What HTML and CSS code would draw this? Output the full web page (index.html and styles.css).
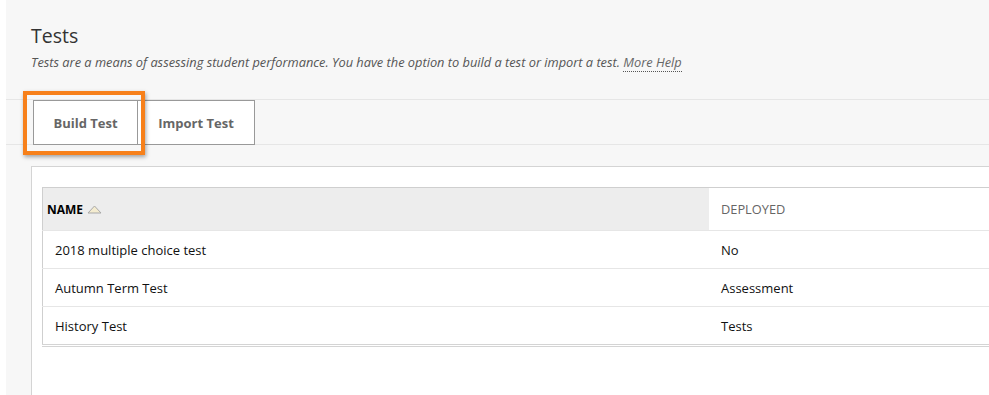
FILE: index.html
```html
<!DOCTYPE html>
<html lang="en">
<head>
  <meta charset="UTF-8" />
  <title>Tests</title>
  <link rel="stylesheet" href="styles.css">
</head>
<body>
  <div class="page">
    <div class="page-header">
      <h1>Tests</h1>
      <p class="intro">Tests are a means of assessing student performance. You have the option to build a test or import a test. <a href="#" class="help">More Help</a></p>
    </div>

    <div class="toolbar">
      <button class="tool-btn highlighted">Build Test</button>
      <button class="tool-btn">Import Test</button>
    </div>

    <div class="panel">
      <table class="list">
        <thead>
          <tr>
            <th class="col-name">NAME <span class="sort-icon"><svg width="15" height="9" viewBox="0 0 15 9"><path d="M7.5 1 L14 8 L1 8 Z" fill="#f4ecd0" stroke="#a9a9a9" stroke-width="1"/></svg></span></th>
            <th class="col-deployed">DEPLOYED</th>
          </tr>
        </thead>
        <tbody>
          <tr><td class="cell-name">2018 multiple choice test</td><td>No</td></tr>
          <tr><td class="cell-name">Autumn Term Test</td><td>Assessment</td></tr>
          <tr><td class="cell-name">History Test</td><td>Tests</td></tr>
        </tbody>
      </table>
    </div>
  </div>
</body>
</html>
```

FILE: styles.css
```css
html, body {
  margin: 0;
  height: 100%;
  overflow: hidden;
  background: #fff;
}

body {
  font-family: 'Open Sans', 'Liberation Sans', sans-serif;
  color: #222;
}

.page {
  margin-left: 6px;
  width: 1100px;
  height: 100%;
  background: #f7f7f7;
}

.page-header {
  padding: 22px 0 0 25px;
  height: 99px;
  box-sizing: border-box;
}

h1 {
  margin: 0;
  font-size: 19.5px;
  font-weight: 400;
  line-height: 28px;
  color: #333;
}

.intro {
  margin: 3px 0 0;
  font-size: 12.8px;
  font-style: italic;
  color: #555;
}

.help {
  color: #666;
  text-decoration: none;
  border-bottom: 1px dotted #555;
}

.toolbar {
  display: flex;
  border-top: 1px solid #e6e6e6;
  border-bottom: 1px solid #e6e6e6;
  padding: 0 0 0 27px;
  height: 46px;
  box-sizing: border-box;
  align-items: stretch;
}

.tool-btn {
  font-family: 'Open Sans', 'Liberation Sans', sans-serif;
  font-size: 13px;
  font-weight: 700;
  color: #666;
  background: #fff;
  border: 1px solid #999;
  margin: 0 0 -1px 0;
  cursor: pointer;
}

.tool-btn:first-child {
  width: 105px;
}

.tool-btn + .tool-btn {
  width: 117px;
  border-left: none;
}

.highlighted {
  position: relative;
}

.highlighted::after {
  content: "";
  position: absolute;
  left: -11px;
  right: -8px;
  top: -10px;
  bottom: -11px;
  border: 4px solid #f7801a;
  box-shadow: 1px 2px 4px rgba(0, 0, 0, 0.35);
  pointer-events: none;
}

.panel {
  margin: 21px 0 0 25px;
  background: #fff;
  border: 1px solid #d4d4d4;
  border-right: none;
  padding: 20px 0 0 10px;
  height: 400px;
}

.list {
  border-collapse: collapse;
  width: 1060px;
  border: 1px solid #cfcfcf;
  border-bottom: 3px double #d4d4d4;
}

.list th {
  height: 42px;
  text-align: left;
  font-size: 12px;
  padding: 0;
}

.col-name {
  width: 662px;
  background: #ededed;
  color: #000;
  font-weight: 700;
  padding-left: 4px !important;
}

.sort-icon {
  display: inline-block;
  vertical-align: middle;
  margin-left: 1px;
  position: relative;
  top: -1px;
}

.sort-icon svg {
  display: block;
}

.col-deployed {
  font-size: 12.8px !important;
  font-weight: 400;
  color: #666;
  padding-left: 12px !important;
  border-bottom: 1px solid #e6e6e6;
}

.list td {
  height: 37px;
  font-size: 13px;
  color: #111;
  border-top: 1px solid #e6e6e6;
  padding: 0 0 0 12px;
}
```
